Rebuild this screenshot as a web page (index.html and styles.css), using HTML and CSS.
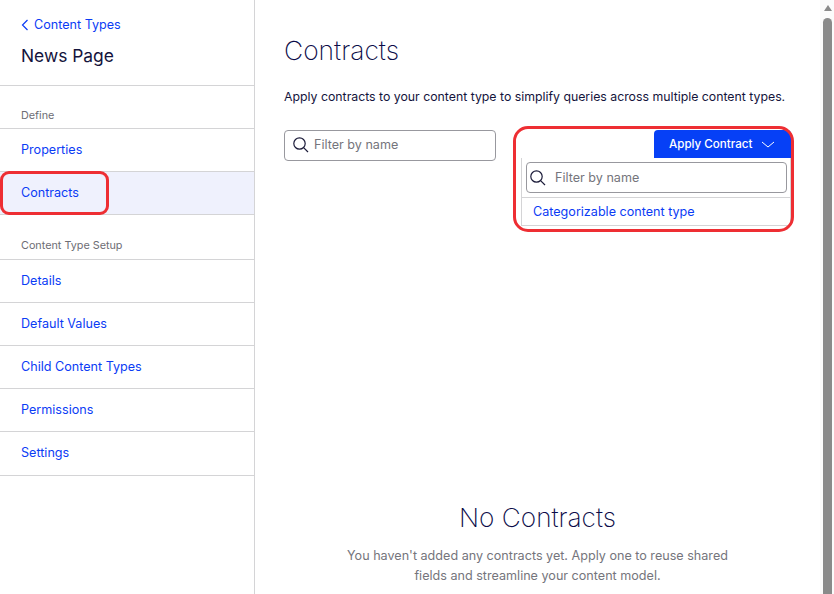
FILE: index.html
```html
<!DOCTYPE html>
<html lang="en">
<head>
<meta charset="UTF-8" />
<meta name="viewport" content="width=device-width, initial-scale=1" />
<title>Contracts</title>
<link rel="stylesheet" href="styles.css">
</head>
<body>

<div id="page">
  <aside id="sidebar">
    <div class="side-head">
      <a class="back-link" href="#">
        <svg width="8" height="12" viewBox="0 0 8 12"><path d="M6.5 1 L1.5 6 L6.5 11" fill="none" stroke="#0b3cf5" stroke-width="1.2"/></svg>
        Content Types
      </a>
      <div class="side-title">News Page</div>
    </div>

    <div class="side-label first">Define</div>
    <a class="side-item" href="#">Properties</a>
    <a class="side-item active" href="#">Contracts<span class="callout callout-nav"></span></a>

    <div class="side-label">Content Type Setup</div>
    <a class="side-item" href="#">Details</a>
    <a class="side-item" href="#">Default Values</a>
    <a class="side-item" href="#">Child Content Types</a>
    <a class="side-item" href="#">Permissions</a>
    <a class="side-item" href="#">Settings</a>
  </aside>

  <main id="content">
    <h1>Contracts</h1>
    <p class="intro">Apply contracts to your content type to simplify queries across multiple content types.</p>

    <div class="toolbar">
      <div class="search search-main">
        <svg width="18" height="18" viewBox="0 0 18 18"><circle cx="7.5" cy="7.5" r="5.7" fill="none" stroke="#1c1c3a" stroke-width="1.2"/><path d="M11.6 11.6 L16 16" stroke="#1c1c3a" stroke-width="1.2"/></svg>
        <span>Filter by name</span>
      </div>

      <div class="apply">
        <button class="apply-btn">Apply Contract
          <svg width="14" height="7" viewBox="0 0 14 7"><path d="M1 1 L7 6 L13 1" fill="none" stroke="#fff" stroke-width="1"/></svg>
        </button>
        <div class="menu">
          <div class="menu-filter">
            <div class="search search-menu">
              <svg width="18" height="18" viewBox="0 0 18 18"><circle cx="7.5" cy="7.5" r="5.7" fill="none" stroke="#1c1c3a" stroke-width="1.2"/><path d="M11.6 11.6 L16 16" stroke="#1c1c3a" stroke-width="1.2"/></svg>
              <span>Filter by name</span>
            </div>
          </div>
          <a class="menu-item" href="#">Categorizable content type</a>
        </div>
        <span class="callout callout-menu"></span>
      </div>
    </div>

    <div class="empty">
      <h2>No Contracts</h2>
      <p>You haven't added any contracts yet. Apply one to reuse shared<br>fields and streamline your content model.</p>
    </div>
  </main>

  <div id="scrollbar">
    <div class="arrow"></div>
    <div class="thumb"></div>
  </div>
</div>

</body>
</html>
```

FILE: styles.css
```css
* { box-sizing: border-box; }
html, body { margin: 0; height: 100%; overflow: hidden; }
body { font-family: Inter, "Liberation Sans", sans-serif; font-size: 12.6px; color: #14143c; background: #fff; }
a { color: #0b3cf5; text-decoration: none; }

#page { display: flex; height: 594px; }

/* sidebar */
#sidebar { width: 255px; flex: none; border-right: 1px solid #d4d4d6; }
.side-head { height: 86px; padding: 16px 0 0 21px; border-bottom: 1px solid #d4d4d6; }
.back-link { display: flex; align-items: center; gap: 5px; height: 17px; line-height: 17px; }
.side-title { margin-top: 11px; font-size: 17.4px; line-height: 24px; color: #14143c; }
.side-label { height: 45px; padding: 24px 0 0 21px; font-size: 10.8px; line-height: 13px; color: #6d6d74; border-bottom: 1px solid #d4d4d6; }
.side-label.first { height: 43px; padding-top: 23px; }
.side-item { display: block; position: relative; height: 43px; padding-left: 21px; line-height: 41px; border-bottom: 1px solid #d4d4d6; }
.side-item:last-child { height: 44px; }
.side-item.active { background: #eff1fd; }

/* main column */
#content { flex: 1; padding: 0 29px; min-width: 0; }
h1 { margin: 34px 0 0; font-size: 26.4px; line-height: 32px; font-weight: 200; color: #0b0b48; }
.intro { margin: 21px 0 0; font-size: 12.3px; line-height: 20px; white-space: nowrap; }

.toolbar { display: flex; justify-content: space-between; margin-top: 23px; }
.search { display: flex; align-items: center; border: 1px solid #98989e; border-radius: 4px; color: #75757c; }
.search-main { width: 212px; height: 31px; padding: 0 0 2px 7px; gap: 4px; }
.search-menu { height: 31px; padding: 0 0 0 2px; gap: 8px; }

.apply { position: relative; width: 270px; }
.apply-btn { display: flex; align-items: center; gap: 9px; margin-left: auto; width: 137px; height: 28px; padding: 0 0 0 15px; border: 0; border-radius: 4px 4px 0 0; background: #0640f6; color: #fff; font: 500 11.6px Inter, "Liberation Sans", sans-serif; }
.menu { position: absolute; left: 0; right: 0; top: 28px; height: 68px; background: #fff; border: 1px solid #d4d4d6; border-top: 0; }
.menu-filter { height: 40px; padding: 4px 3px 0 4px; border-bottom: 1px solid #d4d4d6; }
.menu-item { display: block; padding-left: 11px; line-height: 28px; }

.empty { margin-top: 341px; text-align: center; }
.empty h2 { margin: 0; font-size: 26.2px; line-height: 32px; font-weight: 200; color: #0b0b48; }
.empty p { margin: 12px 0 0; line-height: 20px; color: #75757c; }

/* red annotation boxes */
.callout { position: absolute; border: 3px solid #ee2e33; border-radius: 9px; pointer-events: none; }
.callout-nav { left: 0; top: -1px; width: 109px; height: 44px; }
.callout-menu { left: -8px; top: -4px; width: 281px; height: 106px; border-radius: 15px; }

/* scrollbar */
#scrollbar { width: 14px; flex: none; background: #fbfbfb; padding: 5px 2px 0 3px; }
.arrow { width: 0; margin: 0 auto; border: 4.5px solid transparent; border-top: 0; border-bottom: 6px solid #8a8a8a; }
.thumb { height: 600px; margin-top: 7px; background: #8a8a8a; border-radius: 5px 5px 0 0; }
```
